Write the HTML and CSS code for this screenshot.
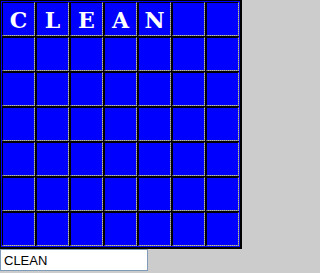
FILE: index.html
```html
<!DOCTYPE html>
<html>
<head>
<meta charset="utf-8">
<link rel="stylesheet" href="styles.css">
</head>
<body>
<div class="board">
  <div class="grid">
    <div class="cell">C</div><div class="cell">L</div><div class="cell">E</div><div class="cell">A</div><div class="cell">N</div><div class="cell"></div><div class="cell"></div>
    <div class="cell"></div><div class="cell"></div><div class="cell"></div><div class="cell"></div><div class="cell"></div><div class="cell"></div><div class="cell"></div>
    <div class="cell"></div><div class="cell"></div><div class="cell"></div><div class="cell"></div><div class="cell"></div><div class="cell"></div><div class="cell"></div>
    <div class="cell"></div><div class="cell"></div><div class="cell"></div><div class="cell"></div><div class="cell"></div><div class="cell"></div><div class="cell"></div>
    <div class="cell"></div><div class="cell"></div><div class="cell"></div><div class="cell"></div><div class="cell"></div><div class="cell"></div><div class="cell"></div>
    <div class="cell"></div><div class="cell"></div><div class="cell"></div><div class="cell"></div><div class="cell"></div><div class="cell"></div><div class="cell"></div>
    <div class="cell"></div><div class="cell"></div><div class="cell"></div><div class="cell"></div><div class="cell"></div><div class="cell"></div><div class="cell"></div>
  </div>
</div>
<input class="word" type="text" value="CLEAN">
</body>
</html>
```

FILE: styles.css
```css
html, body {
  margin: 0;
  padding: 0;
  background: #cccccc;
}

.board {
  width: fit-content;
  border: 1px solid #000;
  border-right-width: 2px;
  border-bottom-width: 2px;
  padding: 1px;
  background: #0000ff;
}

.grid {
  display: grid;
  grid-template-columns: repeat(7, 33px);
  grid-auto-rows: 34px;
  gap: 1px;
  background: #000;
}

.cell {
  box-sizing: border-box;
  border-top: 1px solid #000;
  border-left: 1px solid #000;
  border-right: 1px dotted #b4b4b4;
  border-bottom: 1px dotted #b4b4b4;
  background: linear-gradient(#0000ff, #0000ff) padding-box, #808080;
  color: #fff;
  font-family: "DejaVu Serif", serif;
  font-weight: bold;
  font-size: 22px;
  display: flex;
  align-items: center;
  justify-content: center;
  line-height: 1;
  padding-top: 2px;
}

.word {
  display: block;
  box-sizing: border-box;
  width: 148px;
  height: 22px;
  margin: 0;
  padding: 0 3px;
  border: 1px solid #7f9db9;
  background: #fff;
  font-family: "Liberation Sans", Arial, sans-serif;
  font-size: 13px;
  color: #000;
  outline: none;
}
```
